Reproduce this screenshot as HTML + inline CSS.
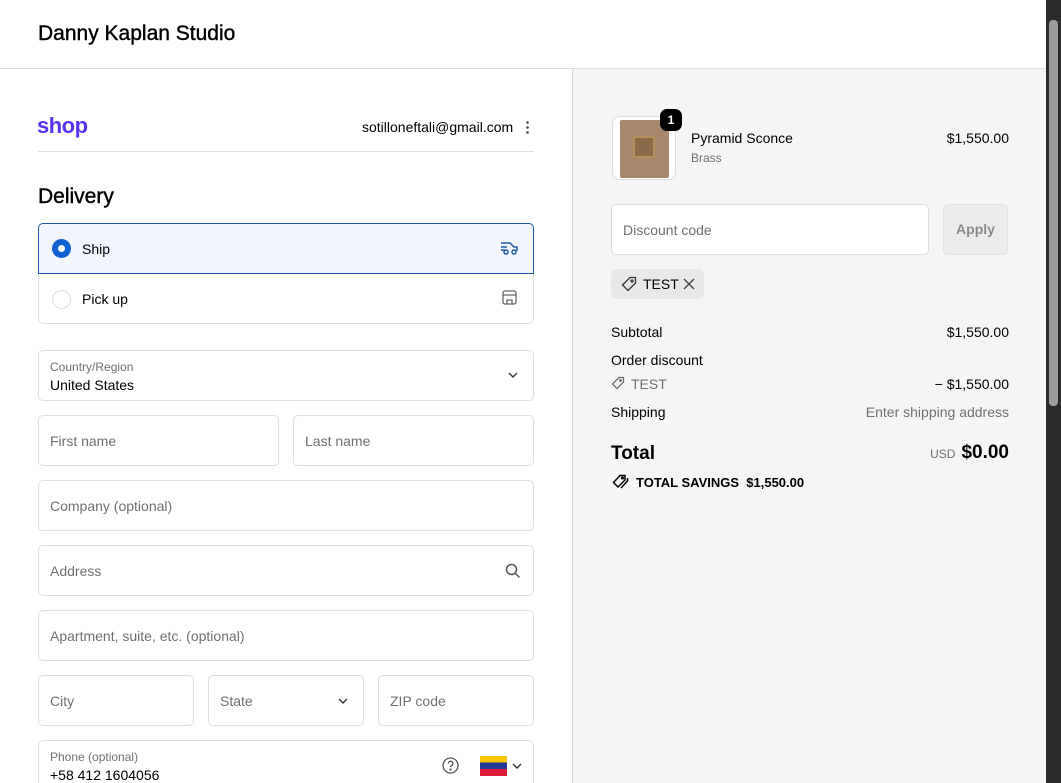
<!DOCTYPE html>
<html><head><meta charset="utf-8"><style>
*{box-sizing:border-box;margin:0;padding:0}
html,body{width:1061px;height:783px;overflow:hidden}
body{font-family:"Liberation Sans",sans-serif;color:#000;background:#fff;position:relative}
.hdr{position:absolute;left:0;top:0;width:1046px;height:69px;border-bottom:1px solid #dedede}
.hdr h1{position:absolute;left:38px;top:22px;font-size:21px;font-weight:normal;letter-spacing:0px;-webkit-text-stroke:0.4px #000}
.right{position:absolute;left:572px;top:69px;width:474px;height:714px;background:#f5f5f5;border-left:1px solid #dedede}
.sb{position:absolute;left:1046px;top:0;width:15px;height:783px;background:#2b2b2b}
.sb div{position:absolute;left:3px;top:20px;width:9px;height:386px;background:#9c9c9c;border-radius:4px}
.in{position:absolute;border:1px solid #dedede;border-radius:5px;background:#fff;font-size:14px;color:#707070}
.in span{position:absolute;left:11px;top:50%;transform:translateY(-50%)}
.abs{position:absolute}
.r{position:absolute;right:37px}
</style></head><body>
<div class="hdr"><h1>Danny Kaplan Studio</h1></div>
<div class="abs" style="left:37px;top:113px;font-size:22px;font-weight:bold;color:#5a31f4;letter-spacing:-0.5px">shop</div>
<div class="abs" style="left:362px;top:119px;font-size:14px">sotilloneftali@gmail.com</div>
<div class="abs" style="left:526px;top:120px;width:3px;height:14px;background:radial-gradient(circle,#555 1.2px,transparent 1.5px) 0 0/3px 5px"></div>
<div class="abs" style="left:38px;top:151px;width:496px;height:1px;background:#dedede"></div>
<div class="abs" style="left:38px;top:185px;font-size:21px;-webkit-text-stroke:0.4px #000">Delivery</div>
<div class="abs" style="left:38px;top:223px;width:496px;height:101px;border:1px solid #dedede;border-radius:5px"></div>
<div class="abs" style="left:38px;top:223px;width:496px;height:51px;border:1px solid #1f5aa8;border-radius:5px 5px 0 0;background:#f2f5fd"></div>
<div class="abs" style="left:52px;top:239px;width:19px;height:19px;border-radius:50%;background:#1060d0"><div style="position:absolute;left:6px;top:6px;width:7px;height:7px;border-radius:50%;background:#fff"></div></div>
<div class="abs" style="left:82px;top:241px;font-size:14px">Ship</div>
<svg class="abs" style="left:500px;top:240px" width="19" height="16" viewBox="0 0 19 16" fill="none" stroke="#1f5aa8" stroke-width="1.5"><path d="M1 3h9l4 4h3v4M1 7h6M1 10h4"/><circle cx="6" cy="12" r="2"/><circle cx="14" cy="12" r="2"/></svg>
<div class="abs" style="left:52px;top:290px;width:19px;height:19px;border-radius:50%;border:1px solid #dedede"></div>
<div class="abs" style="left:82px;top:291px;font-size:14px">Pick up</div>
<svg class="abs" style="left:502px;top:290px" width="15" height="15" viewBox="0 0 15 15" fill="none" stroke="#666" stroke-width="1.3"><rect x="1" y="1" width="13" height="13" rx="2"/><path d="M1 5h13M5 14v-4h5v4"/></svg>
<div class="in" style="left:38px;top:350px;width:496px;height:51px"><div class="abs" style="left:11px;top:9px;font-size:12px;color:#707070">Country/Region</div><div class="abs" style="left:11px;top:26px;font-size:14px;color:#000">United States</div><svg class="abs" style="left:468px;top:20px" width="12" height="8"><path d="M2 2l4 4 4-4" fill="none" stroke="#333" stroke-width="1.4"/></svg></div>
<div class="in" style="left:38px;top:415px;width:241px;height:51px"><span>First name</span></div>
<div class="in" style="left:293px;top:415px;width:241px;height:51px"><span>Last name</span></div>
<div class="in" style="left:38px;top:480px;width:496px;height:51px"><span>Company (optional)</span></div>
<div class="in" style="left:38px;top:545px;width:496px;height:51px"><span>Address</span><svg class="abs" style="left:466px;top:17px" width="16" height="16" fill="none" stroke="#555" stroke-width="1.5"><circle cx="6.5" cy="6.5" r="5"/><path d="M10.5 10.5l4 4"/></svg></div>
<div class="in" style="left:38px;top:610px;width:496px;height:51px"><span>Apartment, suite, etc. (optional)</span></div>
<div class="in" style="left:38px;top:675px;width:156px;height:51px"><span>City</span></div>
<div class="in" style="left:208px;top:675px;width:156px;height:51px"><span>State</span><svg class="abs" style="left:128px;top:21px" width="12" height="8"><path d="M2 2l4 4 4-4" fill="none" stroke="#333" stroke-width="1.4"/></svg></div>
<div class="in" style="left:378px;top:675px;width:156px;height:51px"><span>ZIP code</span></div>
<div class="in" style="left:38px;top:740px;width:496px;height:51px"><div class="abs" style="left:11px;top:9px;font-size:12px">Phone (optional)</div><div class="abs" style="left:11px;top:26px;font-size:14px;color:#000">+58 412 1604056</div>
<svg class="abs" style="left:403px;top:16px" width="17" height="17" fill="none" stroke="#555" stroke-width="1.3"><circle cx="8.5" cy="8.5" r="7.5"/><path d="M6.3 6.5a2.3 2.3 0 1 1 3 2.2c-.6.3-.8.7-.8 1.4"/><circle cx="8.5" cy="12.5" r=".5" fill="#555"/></svg>
<div class="abs" style="left:441px;top:15px;width:27px;height:20px;background:linear-gradient(#f7c600 33%,#1f3a8f 33% 66%,#dd1c3a 66%)"></div>
<svg class="abs" style="left:472px;top:21px" width="12" height="8"><path d="M2 2l4 4 4-4" fill="none" stroke="#333" stroke-width="1.4"/></svg></div>
<div class="right">
<div class="abs" style="left:39px;top:47px;width:64px;height:64px;border:1px solid #dedede;border-radius:8px;background:#fff;overflow:hidden"><div style="position:absolute;left:7px;top:3px;width:49px;height:58px;background:#a9876b;border-radius:2px"><div style="position:absolute;left:13px;top:16px;width:22px;height:22px;background:#8c6a4a;border:2px solid #b88e60"></div></div></div>
<div class="abs" style="left:87px;top:40px;width:22px;height:22px;border-radius:7px;background:#000;color:#fff;font-size:12px;font-weight:bold;text-align:center;line-height:22px">1</div>
<div class="abs" style="left:118px;top:61px;font-size:14px">Pyramid Sconce</div>
<div class="abs" style="left:118px;top:82px;font-size:12px;color:#707070">Brass</div>
<div class="r" style="top:61px;font-size:14px">$1,550.00</div>
<div class="in" style="left:38px;top:135px;width:318px;height:51px"><span>Discount code</span></div>
<div class="abs" style="left:370px;top:135px;width:65px;height:51px;border:1px solid #e2e2e2;border-radius:5px;background:#ececec;color:#8a8a8a;font-size:14px;font-weight:bold;text-align:center;line-height:49px">Apply</div>
<div class="abs" style="left:38px;top:200px;width:93px;height:30px;border-radius:5px;background:#e8e8e8"></div>
<svg class="abs" style="left:48px;top:207px" width="16" height="16" fill="none" stroke="#333" stroke-width="1.3"><path d="M9 1.5h5.5V7L7 14.5 1.5 9z"/><circle cx="11" cy="5" r="1"/></svg>
<div class="abs" style="left:70px;top:207px;font-size:14px">TEST</div>
<svg class="abs" style="left:110px;top:209px" width="12" height="12" stroke="#444" stroke-width="1.4"><path d="M1 1l10 10M11 1L1 11"/></svg>
<div class="abs" style="left:38px;top:255px;font-size:14px">Subtotal</div>
<div class="r" style="top:255px;font-size:14px">$1,550.00</div>
<div class="abs" style="left:38px;top:283px;font-size:14px">Order discount</div>
<svg class="abs" style="left:38px;top:307px" width="14" height="14" fill="none" stroke="#666" stroke-width="1.2"><path d="M8 1.5h4.5V6L6 12.5 1.5 8z"/><circle cx="9.5" cy="4.5" r=".8"/></svg>
<div class="abs" style="left:58px;top:307px;font-size:14px;color:#707070">TEST</div>
<div class="r" style="top:307px;font-size:14px">− $1,550.00</div>
<div class="abs" style="left:38px;top:335px;font-size:14px">Shipping</div>
<div class="r" style="top:335px;font-size:14px;color:#707070">Enter shipping address</div>
<div class="abs" style="left:38px;top:374px;font-size:19px;font-weight:bold">Total</div>
<div class="r" style="top:373px;font-size:19px;font-weight:bold"><span style="font-size:12px;color:#707070;font-weight:normal;margin-right:6px">USD</span>$0.00</div>
<svg class="abs" style="left:39px;top:405px" width="18" height="16" fill="none" stroke="#000" stroke-width="1.5"><path d="M8 1.5h5V6L6 13 1.5 8.5z M15.5 4v3L9 14"/><circle cx="10.5" cy="4" r=".8"/></svg>
<div class="abs" style="left:63px;top:406px;font-size:13px;font-weight:bold">TOTAL SAVINGS&nbsp; $1,550.00</div>
</div>
<div class="sb"><div></div></div>
</body></html>
